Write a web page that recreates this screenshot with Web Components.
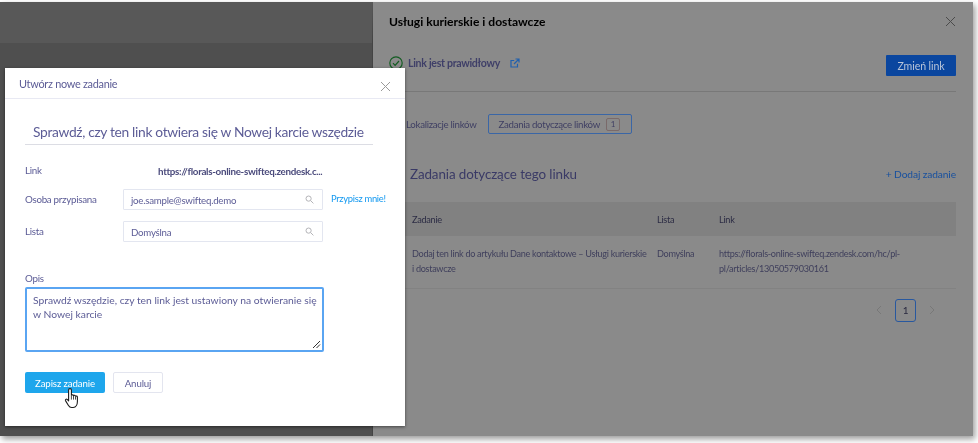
<!DOCTYPE html>
<html lang="pl">
<head>
<meta charset="utf-8">
<title>Utwórz nowe zadanie</title>
<style>
  html, body { margin: 0; background: #fff; }
  body { font-family: Lato, "Open Sans", sans-serif; overflow: hidden; width: 978px; height: 443px; }
</style>
</head>
<body>
<task-window>
  <link-panel></link-panel>
  <task-dialog slot="overlay"></task-dialog>
</task-window>
<script>
const closeIcon = `<svg width="11" height="11" viewBox="0 0 11 11" fill="none" stroke="currentColor" stroke-width="1"><path d="M1 1l9 9M10 1l-9 9"/></svg>`;

class TaskWindow extends HTMLElement {
  constructor() {
    super();
    this.root = this.attachShadow({mode: 'open'});
    this.root.innerHTML = `
<style>
  :host {
    display: block;
    position: relative;
    width: 973px;
    height: 434px;
    margin-top: 2px;
    background: #8a8a8a;
    box-shadow: 2px 3px 6px rgba(0, 0, 0, 0.4);
    filter: blur(0.3px);
  }
  #all {
    display: grid;
    grid-template-columns: 373px 1fr;
    height: 100%;
  }
  #back {
    background: #4f4f4f;
    border-top: 41px solid #585858;
    box-sizing: border-box;
    border-right: 1px solid #444;
  }
  #overlay {
    position: absolute;
    left: 5px;
    top: 66px;
  }
</style>
<div id="all">
  <div id="back"></div>
  <slot></slot>
</div>
<div id="overlay"><slot name="overlay"></slot></div>
    `;
  }
}

class LinkPanel extends HTMLElement {
  constructor() {
    super();
    this.root = this.attachShadow({mode: 'open'});
    this.root.innerHTML = `
<style>
  :host {
    display: block;
    background: #8a8a8a;
    color: #3f3f63;
    font-size: 9.7px;
    letter-spacing: -0.3px;
    padding: 0 17px 0 16px;
    min-width: 0;
  }
  header {
    display: flex;
    justify-content: space-between;
    align-items: center;
    height: 38px;
    color: #000;
    font-weight: 700;
    font-size: 12.1px;
    letter-spacing: 0;
  }
  header svg { color: #4b4b4b; }
  #status {
    display: flex;
    align-items: center;
    border-bottom: 1px solid #787878;
    height: 51px;
  }
  #state {
    display: flex;
    align-items: center;
    margin-bottom: 6px;
    font-size: 10.6px;
    font-weight: 700;
    color: #3f3f68;
  }
  #state .ok { margin-right: 5px; flex: none; }
  #state .ext { margin-left: 10px; flex: none; }
  #change {
    margin-left: auto;
    width: 70px;
    height: 21px;
    background: #0a469f;
    color: #b8c4d8;
    border-radius: 1px;
    display: flex;
    align-items: center;
    justify-content: center;
    font-size: 10.6px;
    letter-spacing: -0.1px;
  }
  nav {
    display: flex;
    align-items: center;
    margin-top: 22px;
    padding-left: 17px;
    height: 20px;
  }
  nav .tab { margin-right: 11px; }
  nav .active {
    display: flex;
    align-items: center;
    box-sizing: border-box;
    width: 144px;
    height: 20px;
    padding-left: 10px;
    border: 1px solid #3a66a6;
    border-radius: 2px;
  }
  nav .badge {
    margin-left: 6px;
    width: 14px;
    height: 13px;
    border: 1px solid #7a6a6a;
    border-radius: 2px;
    box-sizing: border-box;
    display: flex;
    align-items: center;
    justify-content: center;
    font-size: 8px;
  }
  #head {
    display: flex;
    justify-content: space-between;
    align-items: center;
    margin-top: 29px;
    height: 22px;
    padding-left: 21px;
  }
  h2 { margin: 0; font-weight: 400; font-size: 13.4px; letter-spacing: -0.1px; color: #3a3a66; }
  #head a { color: #17509f; font-size: 10.2px; letter-spacing: -0.1px; }
  table {
    border-collapse: collapse;
    width: 100%;
    margin-top: 17px;
    table-layout: fixed;
  }
  th {
    background: #818181;
    height: 34px;
    padding: 0;
    text-align: left;
    font-weight: 400;
    font-size: 9.2px;
    color: #2c2c44;
  }
  td {
    padding: 10px 0 0;
    height: 52px;
    box-sizing: border-box;
    vertical-align: top;
    line-height: 15px;
    font-size: 9.1px;
    border-bottom: 1px solid #828282;
    color: #3f3f5c;
  }
  th:first-child, td:first-child { padding-left: 23px; }
  #pages {
    display: flex;
    justify-content: flex-end;
    align-items: center;
    gap: 13px;
    margin-top: 10px;
    padding-right: 21px;
    color: #787878;
  }
  #pages b {
    width: 21px;
    height: 23px;
    box-sizing: border-box;
    border: 1px solid #28589f;
    border-radius: 3px;
    color: #2a2a40;
    font-weight: 400;
    font-size: 10px;
    display: flex;
    align-items: center;
    justify-content: center;
  }
</style>
<header>
  <span>Usługi kurierskie i dostawcze</span>
  ${closeIcon}
</header>
<div id="status">
  <div id="state">
    <svg class="ok" width="14" height="14" viewBox="0 0 14 14" fill="none" stroke="#135c22" stroke-width="1.2"><circle cx="7" cy="7" r="6.2"/><path d="M4 7.2l2.1 2.1L10 5"/></svg>
    <span>Link jest prawidłowy</span>
    <svg class="ext" width="10" height="10" viewBox="0 0 10 10" fill="none" stroke="#2160ad" stroke-width="1.2"><path d="M7.5 5.8v3.2H1V2.5h3.2M5.5 1H9v3.5M9 1L4 6"/></svg>
  </div>
  <span id="change">Zmień link</span>
</div>
<nav>
  <span class="tab">Lokalizacje linków</span>
  <span class="active">Zadania dotyczące linków <span class="badge">1</span></span>
</nav>
<div id="head">
  <h2>Zadania dotyczące tego linku</h2>
  <a>+ Dodaj zadanie</a>
</div>
<table>
  <colgroup><col style="width:268px"><col style="width:62px"><col></colgroup>
  <tr><th>Zadanie</th><th>Lista</th><th>Link</th></tr>
  <tr>
    <td>Dodaj ten link do artykułu Dane kontaktowe – Usługi kurierskie<br>i dostawcze</td>
    <td>Domyślna</td>
    <td>https://florals-online-swifteq.zendesk.com/hc/pl-<br>pl/articles/13050579030161</td>
  </tr>
</table>
<div id="pages">
  <svg width="6" height="10" viewBox="0 0 6 10" fill="none" stroke="currentColor"><path d="M5 1L1 5l4 4"/></svg>
  <b>1</b>
  <svg width="6" height="10" viewBox="0 0 6 10" fill="none" stroke="currentColor"><path d="M1 1l4 4-4 4"/></svg>
</div>
    `;
  }
}

class FormRow extends HTMLElement {
  constructor() {
    super();
    this.root = this.attachShadow({mode: 'open'});
    this.root.innerHTML = `
<style>
  :host {
    display: grid;
    grid-template-columns: 98px 200px auto;
    align-items: center;
    color: #5c5c96;
    font-size: 9.8px;
    letter-spacing: -0.3px;
  }
  #label { position: relative; top: -1px; }
</style>
<span id="label"></span>
<slot></slot>
<slot name="after"></slot>
    `;
    this.root.getElementById('label').textContent = this.getAttribute('label');
  }
}

class SearchBox extends HTMLElement {
  constructor() {
    super();
    this.root = this.attachShadow({mode: 'open'});
    this.root.innerHTML = `
<style>
  :host {
    display: flex;
    align-items: center;
    justify-content: space-between;
    box-sizing: border-box;
    height: 21px;
    padding: 0 8px 0 7px;
    border: 1px solid #e3e6f0;
    border-radius: 1px;
    color: #5c5c96;
    font-size: 9.7px;
    letter-spacing: -0.25px;
  }
  svg { flex: none; }
</style>
<slot></slot>
<svg width="9" height="9" viewBox="0 0 9 9" fill="none" stroke="#b4b4b8" stroke-width="1"><circle cx="3.6" cy="3.6" r="2.6"/><path d="M5.6 5.6L8.4 8.4"/></svg>
    `;
  }
}

class HandCursor extends HTMLElement {
  constructor() {
    super();
    this.root = this.attachShadow({mode: 'open'});
    this.root.innerHTML = `
<style>
  :host { display: block; position: absolute; left: 59px; top: 319px; width: 17px; height: 22px; }
</style>
<svg width="17" height="22" viewBox="0 0 17 22">
  <path d="M6 1.6c.9 0 1.4.6 1.4 1.4v5.2c.5-.5 1.7-.5 2.1.3.6-.4 1.7-.2 2 .6.7-.3 1.9 0 1.9 1.1v4.4c0 2.6-1.3 5.9-4.2 5.9H7.6c-1.7 0-2.5-1-3.3-2.3L1.5 13.6c-.5-.9.7-2 1.7-1.2l1.4 1.4V3c0-.8.6-1.4 1.4-1.4z" fill="#fff" stroke="#1c1c1c" stroke-width="1.1" stroke-linejoin="round"/>
  <path d="M7.4 8.6v4M9.5 8.8v3.8M11.5 9.4v3.2" stroke="#1c1c1c" stroke-width=".8" fill="none"/>
</svg>
    `;
  }
}

class TaskDialog extends HTMLElement {
  constructor() {
    super();
    this.root = this.attachShadow({mode: 'open'});
    this.root.innerHTML = `
<style>
  :host {
    display: block;
    position: relative;
    box-sizing: border-box;
    width: 400px;
    height: 358px;
    background: #fff;
    color: #5c5c96;
    box-shadow: 0 1px 3px rgba(0, 0, 0, 0.5);
  }
  header {
    display: flex;
    justify-content: space-between;
    align-items: center;
    height: 30px;
    padding: 0 14px 0 14px;
    border-bottom: 1px solid #e8e9f3;
    font-size: 10.9px;
    letter-spacing: -0.28px;
  }
  header svg { color: #9a9a9a; margin-top: 6px; }
  main { padding: 0 32px 0 20px; }
  #name {
    margin-top: 20px;
    height: 25px;
    padding-left: 8px;
    border-bottom: 1px solid #dcdde4;
    font-size: 13.8px;
    letter-spacing: -0.33px;
    line-height: 25px;
    white-space: nowrap;
  }
  #link { margin-top: 18px; height: 16px; }
  #link b { grid-column: 2; padding-left: 35px; font-size: 9.8px; color: #4b4b7c; white-space: nowrap; }
  #who { margin-top: 10px; }
  #list { margin-top: 11px; }
  form-row a { color: #1499f0; margin-left: 8px; font-size: 9.4px; white-space: nowrap; position: relative; top: -1px; }
  #desc { margin-top: 30px; font-size: 9.8px; letter-spacing: -0.3px; line-height: 13px; }
  #area {
    position: relative;
    box-sizing: border-box;
    width: 299px;
    height: 65px;
    margin-top: 2px;
    padding: 4px 6px;
    border: 2px solid #5aa5f2;
    border-radius: 2px;
    font-size: 10.3px;
    line-height: 14px;
    white-space: nowrap;
  }
  #area svg { position: absolute; right: 1px; bottom: 1px; }
  #actions { display: flex; gap: 8px; margin-top: 20px; }
  #actions span {
    box-sizing: border-box;
    height: 21px;
    display: flex;
    align-items: center;
    justify-content: center;
    border-radius: 2px;
    font-size: 9.7px;
    letter-spacing: -0.12px;
  }
  #save { width: 80px; background: #1ea6ec; color: #fff; }
  #cancel { width: 50px; border: 1px solid #e3e5ef; }
</style>
<header>
  <span>Utwórz nowe zadanie</span>
  ${closeIcon}
</header>
<main>
  <div id="name">Sprawdź, czy ten link otwiera się w Nowej karcie wszędzie</div>
  <form-row id="link" label="Link"><b>https://florals-online-swifteq.zendesk.c...</b></form-row>
  <form-row id="who" label="Osoba przypisana">
    <search-box>joe.sample@swifteq.demo</search-box>
    <a slot="after">Przypisz mnie!</a>
  </form-row>
  <form-row id="list" label="Lista">
    <search-box>Domyślna</search-box>
  </form-row>
  <div id="desc">Opis</div>
  <div id="area">Sprawdź wszędzie, czy ten link jest ustawiony na otwieranie się<br>w Nowej karcie
    <svg width="9" height="9" viewBox="0 0 9 9" stroke="#333" stroke-width="1"><path d="M1 8l7-7M4.5 8L8 4.5"/></svg>
  </div>
  <div id="actions">
    <span id="save">Zapisz zadanie</span>
    <span id="cancel">Anuluj</span>
  </div>
</main>
<hand-cursor></hand-cursor>
    `;
  }
}

customElements.define('form-row', FormRow);
customElements.define('search-box', SearchBox);
customElements.define('hand-cursor', HandCursor);
customElements.define('task-dialog', TaskDialog);
customElements.define('link-panel', LinkPanel);
customElements.define('task-window', TaskWindow);
</script>
</body>
</html>
